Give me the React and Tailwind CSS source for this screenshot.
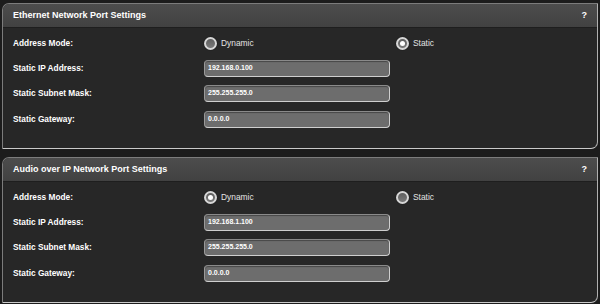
import React from 'react';

const panels = [
  {
    title: 'Ethernet Network Port Settings',
    mode: 'static',
    ip: '192.168.0.100',
    mask: '255.255.255.0',
    gw: '0.0.0.0',
  },
  {
    title: 'Audio over IP Network Port Settings',
    mode: 'dynamic',
    ip: '192.168.1.100',
    mask: '255.255.255.0',
    gw: '0.0.0.0',
  },
];

function Radio({ checked, label }) {
  return (
    <label className="flex items-center gap-[4px] w-[192px]">
      <span className="w-[13px] h-[13px] rounded-full border-2 border-[#d6d6d6] bg-gradient-to-b from-[#5e5e5e] to-[#7a7a7a] flex items-center justify-center shadow-[0_0_1px_#000]">
        {checked && <span className="w-[5px] h-[5px] rounded-full bg-white" />}
      </span>
      <span className="text-[8.4px] text-[#e4e4e4]">{label}</span>
    </label>
  );
}

function Field({ value }) {
  return (
    <div className="w-[186px] h-[17px] rounded-[4px] border border-[#cfcfcf] border-t-[#8a8a8a] border-l-[#9a9a9a] bg-[#6d6d6d] shadow-[inset_0_1px_1px_rgba(0,0,0,0.35)] flex items-center pl-[3px] text-[7px] font-bold text-white">
      {value}
    </div>
  );
}

function Row({ label, children }) {
  return (
    <div className="flex items-center h-[25px] last:h-[26px]">
      <div className="w-[201px] pl-[10px] text-[8.3px] font-bold text-white">{label}</div>
      {children}
    </div>
  );
}

function Panel({ p }) {
  return (
    <div className="ml-[2px] w-[596px] rounded-tl-[7px] rounded-br-[7px] border border-[#7c7c7c] border-b-[#cacaca] border-r-[#b0b0b0] bg-[#272727] overflow-hidden">
      <div className="h-[24px] bg-gradient-to-b from-[#4d4d4d] to-[#414141] border-b border-[#1e1e1e] flex items-center justify-between pl-[10px] pr-[10px] text-[9px] font-bold text-white">
        <span>{p.title}</span>
        <span>?</span>
      </div>
      <div className="pt-[3px] pb-[16px]">
        <Row label="Address Mode:">
          <Radio checked={p.mode === 'dynamic'} label="Dynamic" />
          <Radio checked={p.mode === 'static'} label="Static" />
        </Row>
        <Row label="Static IP Address:"><Field value={p.ip} /></Row>
        <Row label="Static Subnet Mask:"><Field value={p.mask} /></Row>
        <Row label="Static Gateway:"><Field value={p.gw} /></Row>
      </div>
    </div>
  );
}

export default function App() {
  return (
    <div className="w-[600px] h-[304px] bg-[#1c1c1c] pt-[3px] flex flex-col gap-[8px] overflow-hidden" style={{ fontFamily: '"Liberation Sans", Arial, sans-serif' }}>
      {panels.map(p => <Panel key={p.title} p={p} />)}
    </div>
  );
}
